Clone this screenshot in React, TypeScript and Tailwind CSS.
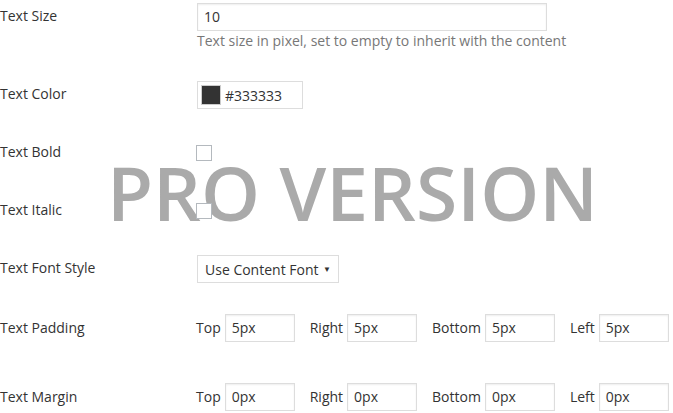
import React from "react"

const font = { fontFamily: '"Open Sans", "Liberation Sans", sans-serif' }

function Label({ children, className = "" }: { children: React.ReactNode; className?: string }) {
  return <div className={`w-[197px] shrink-0 text-[14px] leading-5 text-[#333] ${className}`}>{children}</div>
}

function Box({ value, w }: { value: string; w: string }) {
  return (
    <div
      className={`${w} h-[28px] border border-[#ddd] bg-white px-[6px] text-[14px] leading-[26px] text-[#333] shadow-[inset_0_1px_2px_rgba(0,0,0,0.07)]`}
    >
      {value}
    </div>
  )
}

function Check() {
  return <div className="mt-[4px] ml-[-1px] h-[16px] w-[16px] border border-[#b4b9be] bg-white" />
}

function Sides({ values }: { values: string[] }) {
  const names = ["Top", "Right", "Bottom", "Left"]
  return (
    <div className="ml-[-1px] flex items-center gap-[15px]">
      {names.map((n, i) => (
        <div key={n} className="flex items-center gap-[4px]">
          <span className="text-[14px] leading-5 text-[#333]">{n}</span>
          <Box value={values[i]} w="w-[70px]" />
        </div>
      ))}
    </div>
  )
}

export default function App() {
  return (
    <div className="relative h-[413px] w-[673px] overflow-hidden bg-white" style={font}>
      <div className="absolute left-[107px] top-[155px] z-0 select-none text-[75px] font-semibold leading-[75px] text-[#aaa]">
        PRO VERSION
      </div>

      <div className="relative z-10 flex flex-col">
        <div className="mt-[3px] flex">
          <Label className="pt-[3px]">Text Size</Label>
          <div>
            <Box value="10" w="w-[350px]" />
            <div className="text-[14px] leading-5 text-[#777]">
              Text size in pixel, set to empty to inherit with the content
            </div>
          </div>
        </div>

        <div className="mt-[30px] flex">
          <Label className="pt-[3px]">Text Color</Label>
          <div className="flex h-[28px] w-[106px] items-center gap-[4px] border border-[#ddd] bg-white px-[3px] text-[14px] text-[#333]">
            <div className="h-[20px] w-[20px] border border-[#ccc] bg-[#333]" />
            <span>#333333</span>
          </div>
        </div>

        <div className="mt-[32px] flex">
          <Label className="pt-[1px]">Text Bold</Label>
          <Check />
        </div>

        <div className="mt-[37px] flex">
          <Label className="pt-[1px]">Text Italic</Label>
          <Check />
        </div>

        <div className="mt-[35px] flex">
          <Label className="pt-[3px]">Text Font Style</Label>
          <div className="flex h-[28px] w-[142px] items-center justify-between border border-[#ddd] bg-white pl-[7px] pr-[7px] text-[14px] text-[#333]">
            <span>Use Content Font</span>
            <span className="text-[8px]">▼</span>
          </div>
        </div>

        <div className="mt-[31px] flex">
          <Label className="pt-[4px]">Text Padding</Label>
          <Sides values={["5px", "5px", "5px", "5px"]} />
        </div>

        <div className="mt-[41px] flex">
          <Label className="pt-[4px]">Text Margin</Label>
          <Sides values={["0px", "0px", "0px", "0px"]} />
        </div>
      </div>
    </div>
  )
}
